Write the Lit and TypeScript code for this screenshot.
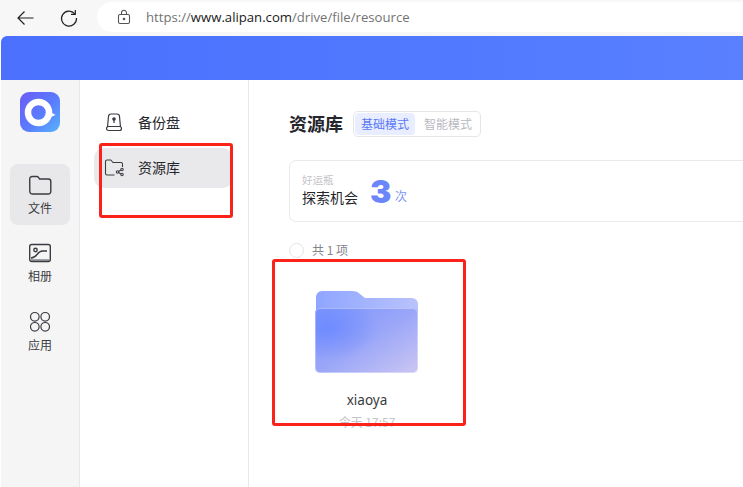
import { LitElement, html, css } from "lit";
import { customElement } from "lit/decorators.js";

@customElement("app-root")
export class AppRoot extends LitElement {
  static styles = css`
    :host { display: block; width: 743px; height: 487px; overflow: hidden; position: relative; background: #fff; font-family: "Noto Sans CJK SC", "Noto Sans", sans-serif; color: #25262b; }
    .chrome { height: 36px; background: #f7f7f7; display: flex; align-items: center; box-sizing: border-box; padding: 0 0 1px 15px; }
    .nav { width: 20px; height: 20px; display: block; flex: none; }
    .reload { margin-left: 24px; }
    .url { margin-left: 18px; margin-top: -1px; flex: 1; height: 30px; background: #fff; border-radius: 15px 0 0 15px; display: flex; align-items: center; padding-left: 19px; font: 13.15px "Open Sans", sans-serif; color: #727272; }
    .url svg { width: 16px; height: 16px; margin-right: 14px; flex: none; }
    .url b { font-weight: 400; color: #1a1a1a; }
    .app { margin-left: 1px; height: 451px; display: flex; flex-direction: column; }
    .hero { height: 44px; flex: none; background: linear-gradient(90deg, #4a70fd 0%, #5079ff 60%, #5a80ff 100%); border-radius: 6px 0 0 0; }
    .body { flex: 1; display: flex; min-height: 0; }
    .rail { width: 78px; flex: none; background: #f5f5f6; border-right: 1px solid #e8e8ea; display: flex; flex-direction: column; align-items: center; padding-top: 12px; }
    .logo { width: 40px; height: 40px; display: block; }
    .rail-item { width: 60px; height: 61px; margin-top: 32px; border-radius: 8px; display: flex; flex-direction: column; align-items: center; padding-top: 9px; box-sizing: border-box; font-size: 12px; line-height: 18px; color: #3b3c42; }
    .rail-item.on { background: #e8e8ea; }
    .rail-item + .rail-item { margin-top: 7px; }
    .rail-item svg { width: 24px; height: 24px; display: block; margin-bottom: 2px; }
    .rail-item:last-child { padding-top: 10px; }
    .panel { width: 168px; flex: none; border-right: 1px solid #e8e8ea; padding-top: 22px; }
    .row { margin-left: 14px; width: 139px; height: 40px; border-radius: 10px; display: flex; align-items: center; padding-left: 10px; box-sizing: border-box; gap: 14px; font-size: 14px; color: #25262b; }
    .row + .row { margin-top: 6px; }
    .row.on { background: #e9e9eb; padding-bottom: 2px; }
    .row svg { width: 20px; height: 20px; flex: none; }
    .main { flex: 1; padding: 30px 0 0 40px; min-width: 0; }
    .head { display: flex; align-items: flex-start; gap: 10px; }
    h1 { margin: 0; font-size: 18px; line-height: 26px; font-weight: 700; color: #25262b; }
    .seg { display: flex; border: 1px solid #e6e6ea; border-radius: 5px; padding: 1px; height: 26px; width: 128px; margin-top: 1px; box-sizing: border-box; font-size: 12px; line-height: 22px; color: #b9b9bf; }
    .seg span { height: 22px; border-radius: 4px; white-space: nowrap; flex: none; }
    .seg .sel { background: #e8eeff; color: #5a78f5; padding: 0 6px; }
    .seg .off { padding-left: 9px; }
    .card { margin-top: 23px; width: 520px; height: 62px; box-sizing: border-box; border: 1px solid #e9e9ec; border-radius: 7px; display: flex; align-items: center; padding-left: 12px; }
    .card-text { display: flex; flex-direction: column; width: 68px; margin-top: -2px; }
    .lucky { font-size: 10.5px; line-height: 14px; color: #c2c2c7; }
    .chance { font-size: 14px; line-height: 20px; color: #25262b; }
    .num { font: 900 32px/34px "Inter", sans-serif; color: #6b85fb; width: 24px; margin-top: 2px; }
    .unit { font-size: 12px; color: #7d93f7; margin-left: 1px; margin-top: 9px; }
    .count { display: flex; align-items: center; gap: 8px; margin-top: 18px; font-size: 12px; line-height: 20px; color: #84858c; }
    .radio { width: 13px; height: 13px; border: 1.5px solid #e4e4e7; border-radius: 50%; flex: none; }
    .file { width: 170px; margin: 30px 0 0 -7px; display: flex; flex-direction: column; align-items: center; }
    .folder { width: 104px; height: 83px; display: block; }
    .name { margin-top: 18px; font: 13.5px/18px "Noto Sans", sans-serif; color: #3a3b40; }
    .date { margin-top: 5px; font-size: 12px; line-height: 16px; color: #c5c5c9; white-space: nowrap; }
    .mark { position: absolute; box-sizing: border-box; border: 3px solid #fb2219; border-radius: 3px; }
    .m1 { left: 99px; top: 143px; width: 134px; height: 75px; }
    .m2 { left: 272px; top: 259px; width: 194px; height: 167px; }
  `;

  render() {
    return html`
      <div class="chrome">
        <svg class="nav" viewBox="0 0 20 20" fill="none" stroke="#222" stroke-width="1.2"><path d="M18.5 10H3M9.5 3.5 3 10l6.5 6.5"/></svg>
        <svg class="nav reload" viewBox="0 0 20 20" fill="none" stroke="#222" stroke-width="1.2"><path d="M15.8 5.8A7.5 7.5 0 1 0 17.5 10"/><path d="M16.3 2v4.300H12"/></svg>
        <div class="url">
          <svg viewBox="0 0 16 16" fill="none" stroke="#555" stroke-width="1.1"><rect x="2.5" y="5.5" width="11" height="9" rx="1.5"/><path d="M5.5 5.5V3.8a2.5 2.5 0 0 1 5 0v1.7"/><circle cx="8" cy="10" r=".8" fill="#555"/></svg>
          <span>https://<b>www.alipan.com</b>/drive/file/resource</span>
        </div>
      </div>
      <div class="app">
        <div class="hero"></div>
        <div class="body">
          <nav class="rail">
            <svg class="logo" viewBox="0 0 40 40">
              <defs><linearGradient id="lg" x1="0" y1="0" x2="1" y2="1"><stop offset="0" stop-color="#6a5cf6"/><stop offset=".55" stop-color="#5a7cff"/><stop offset="1" stop-color="#58b4fb"/></linearGradient></defs>
              <rect width="40" height="40" rx="9" fill="url(#lg)"/>
              <circle cx="18.5" cy="20.5" r="10.5" fill="none" stroke="#fff" stroke-width="6.5"/>
              <path d="M29 19 35.5 23 31 25 28 30z" fill="#fff"/>
            </svg>
            <div class="rail-item on">
              <svg viewBox="0 0 24 24" fill="none" stroke="#3b3c42" stroke-width="1.4"><path d="M1.7 6a2.500 2.500 0 0 1 2.500-2.500h4.500c1 0 1.500.5 2 1.200l.8 1.300h8.800a2.500 2.500 0 0 1 2.500 2.500v10a2.500 2.500 0 0 1-2.500 2.500h-16a2.500 2.500 0 0 1-2.500-2.500z"/></svg>
              文件
            </div>
            <div class="rail-item">
              <svg viewBox="0 0 24 24" fill="none" stroke="#3b3c42" stroke-width="1.4"><rect x="1.7" y="3.5" width="20.6" height="17" rx="2"/><circle cx="7.5" cy="9" r="1.7"/><path d="M3 17c3 0 4-1 6-3.500s3-3.500 5.500-3.500H19"/><path d="M3 19h18" stroke-width=".9"/></svg>
              相册
            </div>
            <div class="rail-item">
              <svg viewBox="0 0 24 24" fill="none" stroke="#3b3c42" stroke-width="1.2"><circle cx="6.8" cy="6.8" r="4.3"/><circle cx="17.2" cy="6.8" r="4.3"/><circle cx="6.8" cy="16.8" r="4.3"/><circle cx="17.2" cy="16.8" r="4.3"/></svg>
              应用
            </div>
          </nav>
          <aside class="panel">
            <div class="row">
              <svg viewBox="0 0 20 20" fill="none" stroke="#3b3c42" stroke-width="1.2"><path d="M3.500 15 4.500 4.500A2.500 2.500 0 0 1 7 2h6a2.500 2.500 0 0 1 2.500 2.500l1 10.500"/><path d="M2.500 16.500A2 2 0 0 1 4.500 14.500h11a2 2 0 0 1 2 2 2 2 0 0 1-2 2h-11a2 2 0 0 1-2-2z"/><circle cx="10" cy="7" r="1.2" fill="#3b3c42"/><path d="M10 7.500v3.500"/></svg>
              备份盘
            </div>
            <div class="row on">
              <svg viewBox="0 0 20 20" fill="none" stroke="#3b3c42" stroke-width="1.1"><path d="M10.500 18H3A1.500 1.500 0 0 1 1.500 16.500v-12A1.500 1.500 0 0 1 3 3h3.800L9 5.500h8A1.500 1.500 0 0 1 18.500 7v3"/><circle cx="18" cy="12.500" r="1.2"/><circle cx="13.500" cy="15" r="1.2"/><circle cx="18" cy="17.500" r="1.2"/><path d="m14.600 14.400 2.300-1.300M14.600 15.600l2.300 1.300"/></svg>
              资源库
            </div>
          </aside>
          <main class="main">
            <div class="head">
              <h1>资源库</h1>
              <div class="seg"><span class="sel">基础模式</span><span class="off">智能模式</span></div>
            </div>
            <div class="card">
              <div class="card-text"><span class="lucky">好运瓶</span><span class="chance">探索机会</span></div>
              <span class="num">3</span>
              <span class="unit">次</span>
            </div>
            <div class="count"><span class="radio"></span>共 1 项</div>
            <div class="file">
              <svg class="folder" viewBox="0 0 104 83">
                <defs>
                  <linearGradient id="fb" x1="0" y1="0" x2="1" y2="0"><stop offset="0" stop-color="#8fa6ff"/><stop offset="1" stop-color="#b9c2fb"/></linearGradient>
                  <linearGradient id="ff" x1="0" y1="0" x2="1" y2="1"><stop offset="0" stop-color="#7d95fd"/><stop offset=".5" stop-color="#9aa6f8"/><stop offset="1" stop-color="#cbc6f3"/></linearGradient>
                  <radialGradient id="fg" cx=".12" cy=".3" r=".5"><stop offset="0" stop-color="#6a88ff" stop-opacity=".85"/><stop offset="1" stop-color="#6a88ff" stop-opacity="0"/></radialGradient>
                </defs>
                <path d="M1 7a6 6 0 0 1 6-6h30c4 0 6 1 8 3l5 4h47a6 6 0 0 1 6 6v16H1z" fill="url(#fb)"/>
                <rect y="18" width="103" height="65" rx="5" fill="url(#ff)"/>
                <rect y="18" width="103" height="65" rx="5" fill="url(#fg)"/>
                <rect x=".5" y="18.500" width="102" height="64" rx="4.500" fill="none" stroke="#fff" stroke-opacity=".35"/>
              </svg>
              <div class="name">xiaoya</div>
              <div class="date">今天 17:57</div>
            </div>
          </main>
        </div>
      </div>
      <div class="mark m1"></div>
      <div class="mark m2"></div>
    `;
  }
}
